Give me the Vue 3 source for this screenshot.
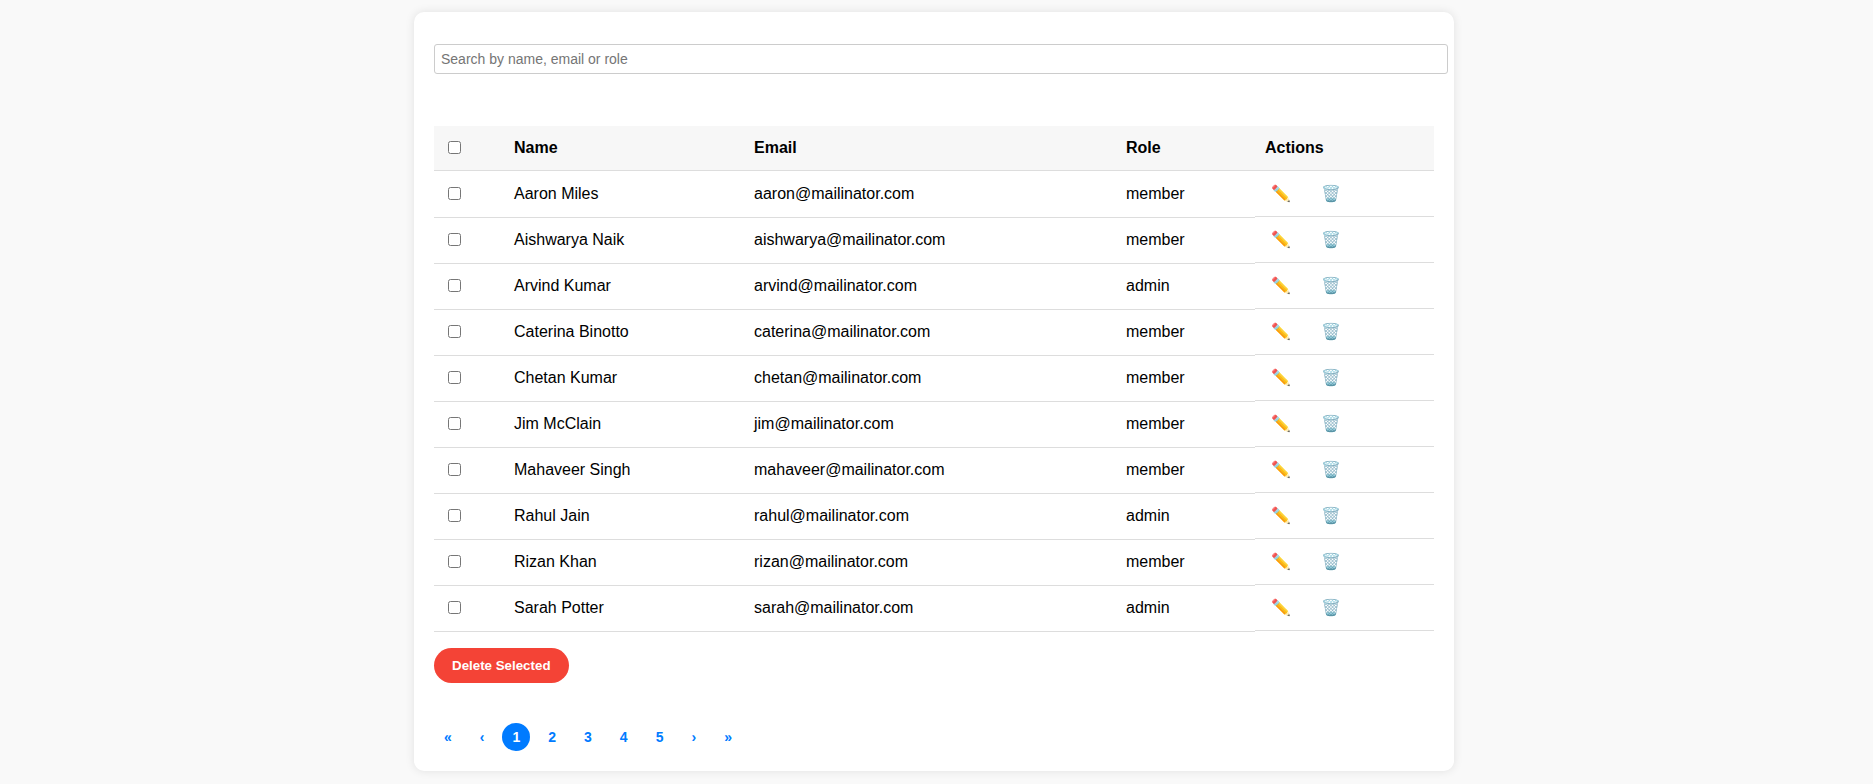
<script setup>
import { computed, ref } from 'vue'

const query = ref('')
const page = ref(1)
const selected = ref([])
const users = ref([
  { id: 1, name: 'Aaron Miles', email: 'aaron@mailinator.com', role: 'member' },
  { id: 2, name: 'Aishwarya Naik', email: 'aishwarya@mailinator.com', role: 'member' },
  { id: 3, name: 'Arvind Kumar', email: 'arvind@mailinator.com', role: 'admin' },
  { id: 4, name: 'Caterina Binotto', email: 'caterina@mailinator.com', role: 'member' },
  { id: 5, name: 'Chetan Kumar', email: 'chetan@mailinator.com', role: 'member' },
  { id: 6, name: 'Jim McClain', email: 'jim@mailinator.com', role: 'member' },
  { id: 7, name: 'Mahaveer Singh', email: 'mahaveer@mailinator.com', role: 'member' },
  { id: 8, name: 'Rahul Jain', email: 'rahul@mailinator.com', role: 'admin' },
  { id: 9, name: 'Rizan Khan', email: 'rizan@mailinator.com', role: 'member' },
  { id: 10, name: 'Sarah Potter', email: 'sarah@mailinator.com', role: 'admin' },
])

const visible = computed(() => {
  const q = query.value.toLowerCase()
  return users.value.filter((u) => [u.name, u.email, u.role].some((v) => v.toLowerCase().includes(q)))
})
const allSelected = computed({
  get: () => visible.value.length > 0 && visible.value.every((u) => selected.value.includes(u.id)),
  set: (on) => { selected.value = on ? visible.value.map((u) => u.id) : [] },
})

function remove(ids) {
  users.value = users.value.filter((u) => !ids.includes(u.id))
  selected.value = selected.value.filter((id) => !ids.includes(id))
}
</script>

<template>
  <main class="card">
    <input v-model="query" class="search" type="text" placeholder="Search by name, email or role" aria-label="Search by name, email or role" />
    <table class="users">
      <colgroup>
        <col class="col-check" />
        <col class="col-name" />
        <col class="col-email" />
        <col class="col-role" />
        <col />
      </colgroup>
      <thead>
        <tr>
          <th><input v-model="allSelected" type="checkbox" aria-label="Select all" /></th>
          <th>Name</th>
          <th>Email</th>
          <th>Role</th>
          <th>Actions</th>
        </tr>
      </thead>
      <tbody>
        <tr v-for="user in visible" :key="user.id">
          <td><input v-model="selected" type="checkbox" :value="user.id" :aria-label="'Select ' + user.name" /></td>
          <td>{{ user.name }}</td>
          <td>{{ user.email }}</td>
          <td>{{ user.role }}</td>
          <td class="actions">
            <button type="button" :aria-label="'Edit ' + user.name">✏️</button>
            <button type="button" :aria-label="'Delete ' + user.name" @click="remove([user.id])">🗑️</button>
          </td>
        </tr>
      </tbody>
    </table>
    <button class="delete" type="button" @click="remove(selected)">Delete Selected</button>
    <nav class="pages" aria-label="Pagination">
      <button type="button" @click="page = 1">«</button>
      <button type="button" @click="page = Math.max(1, page - 1)">‹</button>
      <button v-for="n in 5" :key="n" type="button" :class="{ active: n === page }" @click="page = n">{{ n }}</button>
      <button type="button" @click="page = Math.min(5, page + 1)">›</button>
      <button type="button" @click="page = 5">»</button>
    </nav>
  </main>
</template>

<style>
body {
  background: #f9f9f9;
  padding: 12px 5px 12px 0;
  font-family: "Liberation Sans", Arial, sans-serif;
}
</style>

<style scoped>
.card {
  box-sizing: border-box;
  max-width: 1040px;
  margin: 0 auto;
  padding: 32px 20px 20px;
  background: #fff;
  border-radius: 10px;
  box-shadow: 0 0 10px rgba(0, 0, 0, 0.1);
}
button {
  font-family: inherit;
  border: 0;
  cursor: pointer;
}
.search {
  display: block;
  width: 100%;
  margin-bottom: 52px;
  padding: 6px;
  border: 1px solid #ccc;
  border-radius: 3px;
  font-family: inherit;
  font-size: 14px;
  line-height: 16px;
}
.users {
  width: 100%;
  table-layout: fixed;
  border-collapse: collapse;
  font-size: 16px;
  line-height: 18px;
}
.col-check { width: 7%; }
.col-name { width: 24%; }
.col-email { width: 37.2%; }
.col-role { width: 13.9%; }
th,
td {
  padding: 12px 10px;
  border-bottom: 1px solid #ddd;
  text-align: left;
}
th {
  background: #f7f7f7;
}
.actions {
  display: flex;
  align-items: center;
  gap: 18px;
  padding: 7px 10px;
}
.actions button {
  padding: 6px;
  background: none;
  font-size: 16px;
  line-height: 19px;
}
.delete {
  display: block;
  margin-top: 16px;
  padding: 10px 18px;
  border-radius: 20px;
  background: #f44336;
  color: #fff;
  font-weight: bold;
}
.pages {
  display: flex;
  gap: 8px;
  margin-top: 40px;
}
.pages button {
  padding: 6px 10px;
  border-radius: 50%;
  background: none;
  color: #007bff;
  font-size: 14px;
  font-weight: bold;
  line-height: 16px;
}
.pages .active {
  background: #007bff;
  color: #fff;
}
</style>
